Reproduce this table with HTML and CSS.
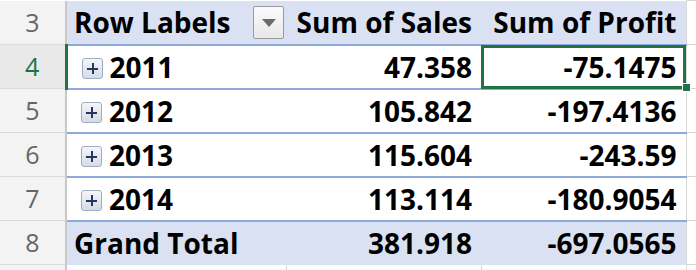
FILE: index.html
```html
<!DOCTYPE html>
<html lang="en">
<head>
    <meta charset="UTF-8">
    <title>Pivot</title>
    <link rel="stylesheet" href="styles.css">
</head>
<body>
    <table class="sheet">
        <colgroup>
            <col class="col-rh">
            <col class="col-a">
            <col class="col-b">
            <col class="col-c">
            <col class="col-d">
        </colgroup>
        <tr class="pivot-head">
            <th class="rh">3</th>
            <td class="label">
                <div class="label-wrap">
                    <span>Row Labels</span>
                    <span class="filter"><span class="arrow"></span></span>
                </div>
            </td>
            <td class="num">Sum of Sales</td>
            <td class="num">Sum of Profit</td>
            <td class="grid"></td>
        </tr>
        <tr class="pivot-row">
            <th class="rh active">4</th>
            <td class="label"><span class="expand"></span>2011</td>
            <td class="num">47.358</td>
            <td class="num selected">-75.1475<div class="sel-box"></div><div class="fill-handle"></div></td>
            <td class="grid"></td>
        </tr>
        <tr class="pivot-row">
            <th class="rh">5</th>
            <td class="label"><span class="expand"></span>2012</td>
            <td class="num">105.842</td>
            <td class="num">-197.4136</td>
            <td class="grid"></td>
        </tr>
        <tr class="pivot-row">
            <th class="rh">6</th>
            <td class="label"><span class="expand"></span>2013</td>
            <td class="num">115.604</td>
            <td class="num">-243.59</td>
            <td class="grid"></td>
        </tr>
        <tr class="pivot-row">
            <th class="rh">7</th>
            <td class="label"><span class="expand"></span>2014</td>
            <td class="num">113.114</td>
            <td class="num">-180.9054</td>
            <td class="grid"></td>
        </tr>
        <tr class="pivot-total">
            <th class="rh">8</th>
            <td class="label">Grand Total</td>
            <td class="num">381.918</td>
            <td class="num">-697.0565</td>
            <td class="grid"></td>
        </tr>
        <tr class="empty-row">
            <th class="rh"></th>
            <td class="grid"></td>
            <td class="grid"></td>
            <td class="grid"></td>
            <td class="grid"></td>
        </tr>
    </table>
</body>
</html>
```

FILE: styles.css
```css
body {
    margin: 0;
    padding: 0;
    overflow: hidden;
    background: #fff;
    font-family: "Open Sans", "Lato", sans-serif;
}

.sheet {
    border-collapse: collapse;
    table-layout: fixed;
    width: 696px;
}

.col-rh { width: 66px; }
.col-a { width: 220px; }
.col-b { width: 195px; }
.col-c { width: 205px; }
.col-d { width: 10px; }

.sheet tr {
    height: 44px;
}

.sheet td,
.sheet th {
    padding: 0;
    font-size: 28px;
    line-height: 1;
    white-space: nowrap;
    overflow: visible;
}

/* row numbers on the left */
.sheet th.rh {
    font-size: 25px;
    background: #f3f3f3;
    color: #666;
    font-weight: 400;
    text-align: center;
    border-right: 2px solid #c8c8c8;
    border-bottom: 1px solid #dcdcdc;
}

.sheet th.rh.active {
    color: #217346;
    background: #e9e9e9;
    border-right: 3px solid #217346;
}

.pivot-head td,
.pivot-row td,
.pivot-total td {
    font-weight: 700;
    color: #000;
}

.pivot-head td,
.pivot-total td {
    background: #d9e1f2;
}

.pivot-head td,
.pivot-row td {
    border-bottom: 2px solid #8ea9db;
}

.pivot-head td.grid,
.pivot-row td.grid,
.pivot-total td.grid,
.empty-row td.grid {
    background: #fff;
    border: 1px solid #d8d8d8;
    border-right: none;
}

.label {
    padding-left: 7px !important;
}

.label-wrap {
    display: flex;
    align-items: center;
    justify-content: space-between;
    padding-right: 2px;
}

.num {
    text-align: right;
    padding-right: 9px !important;
}

.filter {
    width: 31px;
    height: 33px;
    box-sizing: border-box;
    border: 1px solid #9a9a9a;
    border-radius: 2px;
    background: linear-gradient(#fbfbfb, #e8e8e8);
    display: flex;
    align-items: center;
    justify-content: center;
}

.arrow {
    width: 0;
    height: 0;
    border-left: 7px solid transparent;
    border-right: 7px solid transparent;
    border-top: 8px solid #6b6b6b;
    margin-top: 2px;
}

.expand {
    display: inline-block;
    position: relative;
    width: 21px;
    height: 21px;
    box-sizing: border-box;
    margin: 0 7px 0 7px;
    vertical-align: -1px;
    border: 1px solid #9eacc4;
    border-radius: 3px;
    background: linear-gradient(#f4f6fa, #d6dbe5);
}

.expand::before,
.expand::after {
    content: "";
    position: absolute;
    background: #26365f;
}

.expand::before {
    left: 4px;
    right: 4px;
    top: 9px;
    height: 2px;
}

.expand::after {
    top: 4px;
    bottom: 4px;
    left: 9px;
    width: 2px;
}

.selected {
    position: relative;
}

.sel-box {
    position: absolute;
    left: 0;
    top: -1px;
    right: 0;
    bottom: -1px;
    border: 3px solid #217346;
}

.fill-handle {
    position: absolute;
    right: -5px;
    bottom: -4px;
    width: 7px;
    height: 7px;
    background: #217346;
    border: 1px solid #fff;
}

.empty-row td.grid {
    border-top: none;
}
```
